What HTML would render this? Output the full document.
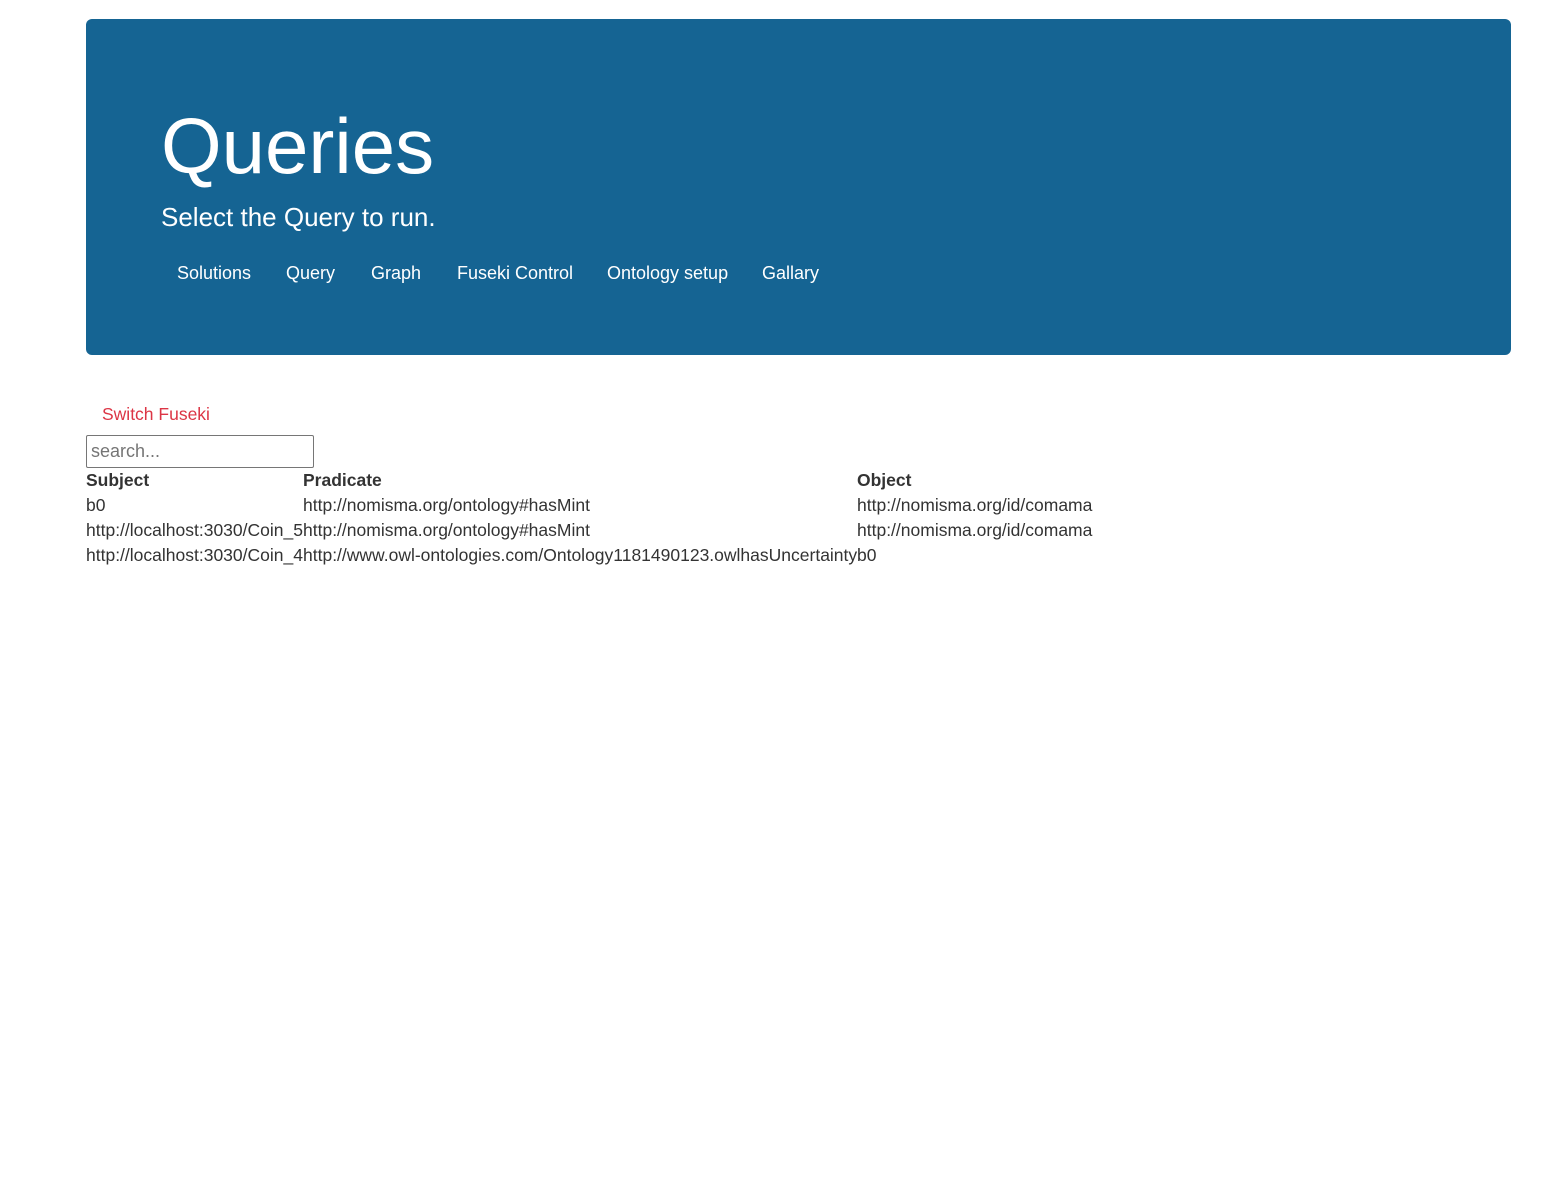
<!DOCTYPE html>
<html><head><meta charset="utf-8"><style>
body{margin:0;background:#fff;font-family:"Liberation Sans",Arial,sans-serif;color:#333;width:1568px;height:1197px;position:relative;overflow:hidden}
.hd{position:absolute;left:86px;top:19px;width:1425px;height:336px;background:#156493;border-radius:6px;color:#fff}
.a{position:absolute;white-space:nowrap}
.h1{font-size:78px;left:75px;top:88px;line-height:1}
.sub{font-size:26px;left:75px;top:183px;line-height:1.2}
.nav{font-size:18px;top:244px;line-height:1.2}
.t{font-size:17.5px;line-height:25px;white-space:nowrap}
b{font-weight:bold}
</style></head><body>
<div class="hd">
<div class="a h1">Queries</div>
<div class="a sub">Select the Query to run.</div>
<div class="a nav" style="left:91px">Solutions</div>
<div class="a nav" style="left:200px">Query</div>
<div class="a nav" style="left:285px">Graph</div>
<div class="a nav" style="left:371px">Fuseki Control</div>
<div class="a nav" style="left:521px">Ontology setup</div>
<div class="a nav" style="left:676px">Gallary</div>
</div>
<div class="a" style="left:102px;top:403px;font-size:17.5px;color:#dc3545;line-height:22px">Switch Fuseki</div>
<div class="a" style="left:86px;top:435px;height:31px;border:1px solid #767676;border-radius:2px;font-size:18px;line-height:31px;color:#757575;padding-left:4px;width:222px">search...</div>
<div class="a t" style="left:86px;top:468px"><b>Subject</b><br>b0<br>http://localhost:3030/Coin_5<br>http://localhost:3030/Coin_4</div>
<div class="a t" style="left:303px;top:468px"><b>Pradicate</b><br>http://nomisma.org/ontology#hasMint<br>http://nomisma.org/ontology#hasMint<br>http://www.owl-ontologies.com/Ontology1181490123.owlhasUncertainty</div>
<div class="a t" style="left:857px;top:468px"><b>Object</b><br>http://nomisma.org/id/comama<br>http://nomisma.org/id/comama<br>b0</div>
</body></html>
